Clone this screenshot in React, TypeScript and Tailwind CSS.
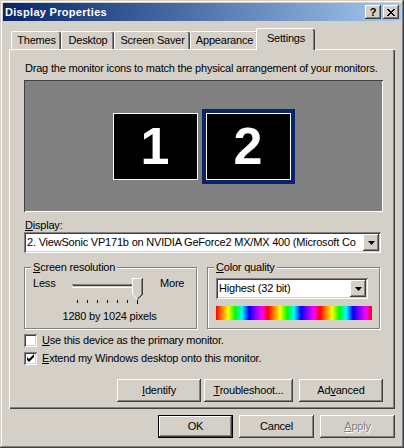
import React from 'react';

const raised = "shadow-[inset_-1px_-1px_#404040,inset_1px_1px_#fff,inset_-2px_-2px_#808080,inset_2px_2px_#d4d0c8]";
const sunken = "shadow-[inset_1px_1px_#808080,inset_-1px_-1px_#fff,inset_2px_2px_#404040,inset_-2px_-2px_#d4d0c8]";

function Arrow() {
  return (
    <svg width="7" height="4" viewBox="0 0 7 4">
      <polygon points="0,0 7,0 3.5,4" fill="#000" />
    </svg>
  );
}

function Combo({ text, className = '' }: { text: string; className?: string }) {
  return (
    <div className={`flex h-[21px] bg-white p-[2px] ${sunken} ${className}`}>
      <div className="flex-1 overflow-hidden whitespace-nowrap pl-[1px] leading-[17px]">{text}</div>
      <div className={`flex h-[17px] w-[16px] items-center justify-center bg-[#d4d0c8] ${raised}`}>
        <Arrow />
      </div>
    </div>
  );
}

function Btn({ children, className = '', def = false }: { children: React.ReactNode; className?: string; def?: boolean }) {
  return (
    <div className={`flex h-[23px] items-center justify-center bg-[#d4d0c8] ${def ? 'border border-black' : ''} ${raised} ${className}`}>
      {children}
    </div>
  );
}

function Check({ checked, children }: { checked?: boolean; children: React.ReactNode }) {
  return (
    <div className="flex h-[13px] items-center">
      <div className={`h-[13px] w-[13px] bg-white ${sunken}`}>
        {checked && (
          <svg width="13" height="13" viewBox="0 0 13 13">
            <path d="M3 5v3l2 2 5-5V2L5 7z" fill="#000" />
          </svg>
        )}
      </div>
      <span className="ml-[5px]">{children}</span>
    </div>
  );
}

function Slider() {
  const ticks = [5, 15, 25, 35, 45, 55, 65];
  return (
    <svg width="74" height="28" viewBox="0 0 74 28" shapeRendering="crispEdges">
      <rect x="0" y="7" width="68" height="1" fill="#808080" />
      <rect x="1" y="8" width="66" height="1" fill="#404040" />
      <rect x="1" y="9" width="66" height="1" fill="#d4d0c8" />
      <rect x="0" y="10" width="68" height="1" fill="#fff" />
      <polygon points="60,1 71,1 71,17 65.5,22.5 60,17" fill="#d4d0c8" />
      <path d="M60.5 17V1.5H70" stroke="#fff" fill="none" />
      <path d="M70.5 1v16.5" stroke="#404040" fill="none" />
      <path d="M69.5 2v15.5" stroke="#808080" fill="none" />
      <path d="M60.5 17.5l5 5" stroke="#fff" fill="none" shapeRendering="auto" />
      <path d="M70.5 17.5l-5 5" stroke="#404040" fill="none" shapeRendering="auto" />
      <path d="M69.5 17.5l-4 4" stroke="#808080" fill="none" shapeRendering="auto" />
      {ticks.map((t, i) => (
        <rect key={t} x={t} y="23" width="1" height={i === ticks.length - 1 ? 4 : 3} fill="#000" />
      ))}
    </svg>
  );
}

export default function App() {
  const tabs = [
    { label: 'Themes', w: 'w-[50px]' },
    { label: 'Desktop', w: 'w-[53px]' },
    { label: 'Screen Saver', w: 'w-[76px]' },
    { label: 'Appearance', w: 'w-[68px]' },
  ];

  return (
    <div className={`flex h-[448px] w-[404px] flex-col bg-[#d4d0c8] p-[3px] font-['Liberation_Sans',Arial,sans-serif] text-[11px] leading-[13px] tracking-[-0.2px] text-black shadow-[inset_-1px_-1px_#404040,inset_1px_1px_#d4d0c8,inset_-2px_-2px_#808080,inset_2px_2px_#fff]`}>
      {/* title bar */}
      <div className="flex h-[18px] items-center bg-gradient-to-r from-[#0a246a] to-[#a6caf0] pl-[2px] pr-[2px]">
        <span className="font-bold tracking-[0.3px] text-white">Display Properties</span>
        <div className="ml-auto flex gap-[2px]">
          <div className={`flex h-[14px] w-[16px] items-center justify-center bg-[#d4d0c8] text-[11px] font-bold leading-none ${raised}`}>?</div>
          <div className={`flex h-[14px] w-[16px] items-center justify-center bg-[#d4d0c8] ${raised}`}>
            <svg width="8" height="7" viewBox="0 0 8 7" shapeRendering="crispEdges">
              <path d="M0 0h2v1h1v1h2V1h1V0h2v1H7v1H6v1H5v1h1v1h1v1h1v1H6V6H5V5H3v1H2v1H0V6h1V5h1V4h1V3H2V2H1V1H0z" fill="#000" />
            </svg>
          </div>
        </div>
      </div>

      <div className="flex flex-1 flex-col px-[6px]">
        {/* tabs */}
        <div className="mt-[7px] flex h-[21px] items-end pl-[2px]">
          {tabs.map((t) => (
            <div
              key={t.label}
              className={`flex h-[18px] ${t.w} items-center justify-center rounded-t-[2px] border-l border-t border-white shadow-[inset_-1px_0_#404040,inset_-2px_0_#808080]`}
            >
              {t.label}
            </div>
          ))}
          <div className="relative z-10 -mb-px -ml-[2px] flex h-[22px] w-[59px] items-center justify-center rounded-t-[2px] border-l border-t border-white bg-[#d4d0c8] pb-[2px] shadow-[inset_-1px_0_#404040,inset_-2px_0_#808080]">
            Settings
          </div>
        </div>

        {/* panel */}
        <div className="flex h-[360px] flex-col border-l border-t border-white pl-[14px] pr-[12px] pt-[12px] shadow-[inset_-1px_-1px_#404040,inset_-2px_-2px_#808080]">
          <p className="whitespace-nowrap pl-[1px]">Drag the monitor icons to match the physical arrangement of your monitors.</p>

          <div className="mt-[5px] flex h-[132px] items-center justify-center bg-[#808080] shadow-[inset_1px_1px_#404040,inset_-1px_-1px_#fff]">
            <div className="flex h-[67px] w-[85px] items-center justify-center border border-white bg-black text-[52px] font-bold leading-none tracking-normal text-white">1</div>
            <div className="ml-[4px] border-4 border-[#0a246a]">
              <div className="flex h-[67px] w-[85px] items-center justify-center border border-white bg-black text-[52px] font-bold leading-none tracking-normal text-white">2</div>
            </div>
          </div>

          <div className="mt-[7px] pl-[1px]">
            <span className="underline">D</span>isplay:
          </div>
          <Combo className="w-[357px]" text="2. ViewSonic VP171b on NVIDIA GeForce2 MX/MX 400 (Microsoft Co" />

          <div className="mt-[8px] flex">
            <fieldset className="h-[68px] w-[173px] border border-[#808080] pl-[8px] pr-[8px] shadow-[1px_1px_#fff,inset_1px_1px_#fff]">
              <legend className="-ml-[2px] bg-[#d4d0c8] px-[2px] leading-[13px]">
                <span className="underline">S</span>creen resolution
              </legend>
              <div className="mt-[3px] flex items-start">
                <span className="w-[39px]">Less</span>
                <Slider />
                <span className="ml-[14px]">More</span>
              </div>
              <div className="mt-[5px] pr-[2px] text-center">1280 by 1024 pixels</div>
            </fieldset>

            <fieldset className="ml-[10px] h-[68px] w-[173px] border border-[#808080] pl-[8px] shadow-[1px_1px_#fff,inset_1px_1px_#fff]">
              <legend className="-ml-[2px] bg-[#d4d0c8] px-[2px] leading-[13px]">
                <span className="underline">C</span>olor quality
              </legend>
              <Combo className="mt-[4px] w-[152px]" text="Highest (32 bit)" />
              <div className="mt-[7px] h-[14px] w-[156px] bg-[repeating-linear-gradient(90deg,#ff0000_0px,#ff8000_6px,#ffff00_12px,#00ff00_19px,#00ffff_26px,#0000ff_33px,#8000ff_39px,#ff00ff_46px,#ff0000_52px)]" />
            </fieldset>
          </div>

          <div className="mt-[5px] flex flex-col gap-[5px]">
            <Check>
              <span className="underline">U</span>se this device as the primary monitor.
            </Check>
            <Check checked>
              <span className="underline">E</span>xtend my Windows desktop onto this monitor.
            </Check>
          </div>

          <div className="mt-[14px] flex justify-end">
            <Btn className="w-[84px]">
              <span><span className="underline">I</span>dentify</span>
            </Btn>
            <Btn className="ml-[3px] w-[89px]">
              <span><span className="underline">T</span>roubleshoot...</span>
            </Btn>
            <Btn className="ml-[6px] w-[84px]">
              <span>Ad<span className="underline">v</span>anced</span>
            </Btn>
          </div>
        </div>

        {/* dialog buttons */}
        <div className="mt-[6px] flex justify-end gap-[6px]">
          <Btn def className="w-[75px]">OK</Btn>
          <Btn className="w-[75px]">Cancel</Btn>
          <Btn className="w-[75px]">
            <span className="text-[#808080] [text-shadow:1px_1px_#fff]">
              <span className="underline">A</span>pply
            </span>
          </Btn>
        </div>
      </div>
    </div>
  );
}
